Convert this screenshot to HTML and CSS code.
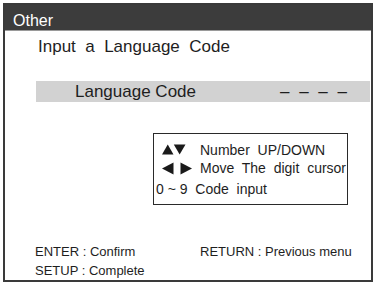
FILE: index.html
```html
<!DOCTYPE html>
<html>
<head>
<meta charset="utf-8">
<link rel="stylesheet" href="styles.css">
</head>
<body>
<div class="screen">
  <div class="header">Other</div>
  <div class="title">Input&nbsp; a&nbsp; Language&nbsp; Code</div>
  <div class="bar">
    <span class="bar-label">Language Code</span>
    <span class="bar-value">– – – –</span>
  </div>
  <div class="info">
    <div class="info-row">
      <svg class="keys" width="38" height="12" viewBox="0 0 38 12">
        <polygon points="0,10.5 5.75,0.5 11.5,10.5" fill="#1a1a1a"/>
        <polygon points="11.8,0.5 23.5,0.5 17.65,10.5" fill="#1a1a1a"/>
      </svg>
      <span>Number&nbsp; UP/DOWN</span>
    </div>
    <div class="info-row">
      <svg class="keys" width="38" height="13" viewBox="0 0 38 13">
        <polygon points="0,6.5 11.5,0.5 11.5,12.5" fill="#1a1a1a"/>
        <polygon points="18.5,0.5 30,6.5 18.5,12.5" fill="#1a1a1a"/>
      </svg>
      <span>Move&nbsp; The&nbsp; digit&nbsp; cursor</span>
    </div>
    <div class="info-row last">0 ~ 9&nbsp; Code&nbsp; input</div>
  </div>
  <div class="footer">
    <div class="footer-col">
      <div>ENTER : Confirm</div>
      <div>SETUP : Complete</div>
    </div>
    <div class="footer-col right">
      <div>RETURN : Previous menu</div>
    </div>
  </div>
</div>
</body>
</html>
```
FILE: styles.css
```css
html, body {
  margin: 0;
  padding: 0;
  background: #ffffff;
}
body {
  font-family: "Liberation Sans", Arial, sans-serif;
  color: #1e1e1e;
}
.screen {
  box-sizing: border-box;
  margin: 3px 0 0 3px;
  width: 370px;
  height: 279px;
  border: 2px solid #3a3a3a;
  display: flex;
  flex-direction: column;
}
.header {
  box-sizing: border-box;
  height: 26px;
  padding: 5px 0 0 8px;
  line-height: 22px;
  font-size: 16px;
  background: #3c3c3c;
  color: #ffffff;
  border-bottom: 1px solid #9a9a9a;
}
.title {
  margin: 6px 0 0 33px;
  font-size: 17px;
  line-height: 20px;
}
.bar {
  margin: 24px 1px 0 31px;
  height: 21px;
  line-height: 21px;
  background: #d2d2d2;
  font-size: 17px;
  display: flex;
  justify-content: space-between;
  padding: 0 23px 0 39px;
}
.bar-value {
  word-spacing: 5px;
}
.info {
  box-sizing: border-box;
  margin: 31px 0 0 148px;
  width: 195px;
  border: 1.5px solid #2a2a2a;
  padding: 7px 0 6px 2px;
  font-size: 14px;
  line-height: 18px;
  white-space: nowrap;
}
.info-row {
  display: flex;
  align-items: center;
}
.info-row.last {
  margin-top: 3px;
}
.keys {
  margin-left: 6px;
  flex: none;
}
.footer {
  margin: 37px 0 0 30px;
  display: flex;
  font-size: 13px;
  line-height: 19px;
}
.footer-col {
  width: 165px;
}
.footer-col.right {
  width: auto;
}
```
